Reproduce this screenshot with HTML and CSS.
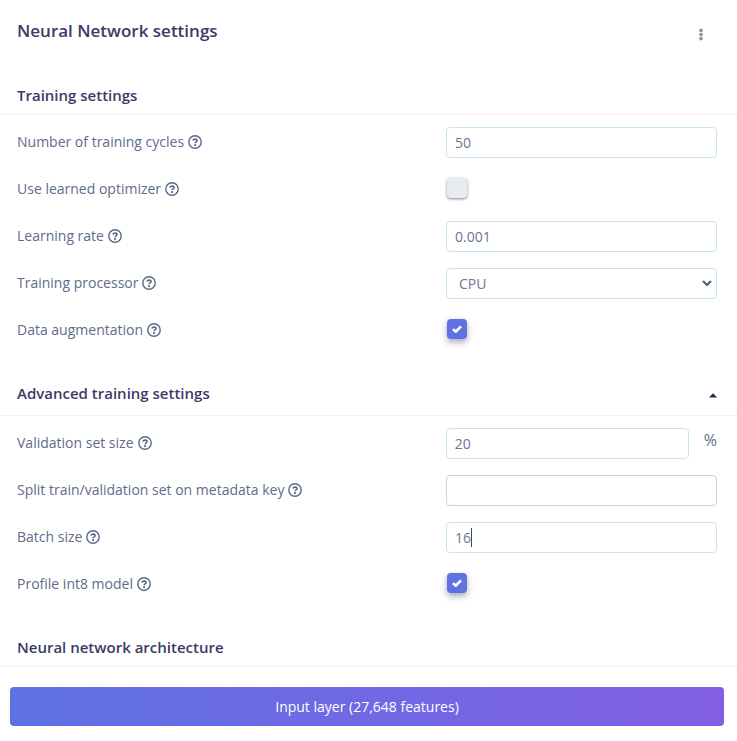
FILE: index.html
```html
<!DOCTYPE html>
<html lang="en">
<head>
<meta charset="utf-8">
<title>Neural Network settings</title>
<link rel="stylesheet" href="styles.css">
</head>
<body>
<svg class="defs" aria-hidden="true">
  <symbol id="help" viewBox="0 0 14 14"><circle cx="7" cy="7" r="6.2" fill="none" stroke="currentColor" stroke-width="1.4"/><path d="M4.9 5.5C5.3 4.5 6.1 4.1 7 4.1c1.2 0 2 .7 2 1.6C9 7 7.1 6.9 7.1 8.3" fill="none" stroke="currentColor" stroke-width="1.6"/><circle cx="7.05" cy="10.1" r="1.1" fill="currentColor"/></symbol>
  <symbol id="check" viewBox="0 0 10 8"><path d="M1 4.1l2.7 2.6L9 1.3" fill="none" stroke="#fff" stroke-width="2.6"/></symbol>
</svg>
<main class="panel">
  <header class="top"><h1>Neural Network settings</h1><svg class="kebab" viewBox="0 0 4 13"><circle cx="2" cy="2.4" r="1.85"/><circle cx="2" cy="6.5" r="1.85"/><circle cx="2" cy="10.6" r="1.85"/></svg></header>
  <section class="group training">
    <h2>Training settings</h2>
    <div class="rows">
      <div class="row"><label>Number of training cycles <svg><use href="#help"/></svg></label><div class="field">50</div></div>
      <div class="row"><label>Use learned optimizer <svg><use href="#help"/></svg></label><span class="box"></span></div>
      <div class="row"><label>Learning rate <svg><use href="#help"/></svg></label><div class="field">0.001</div></div>
      <div class="row"><label>Training processor <svg><use href="#help"/></svg></label><div class="field select">CPU<svg class="chevron" viewBox="0 0 10 7"><path d="M1 1l4 4 4-4"/></svg></div></div>
      <div class="row"><label>Data augmentation <svg><use href="#help"/></svg></label><span class="box on"><svg><use href="#check"/></svg></span></div>
    </div>
  </section>
  <section class="group advanced">
    <h2>Advanced training settings<svg class="caret" viewBox="0 0 8 5"><path d="M0 4.6L4 .2l4 4.4z"/></svg></h2>
    <div class="rows">
      <div class="row"><label>Validation set size <svg><use href="#help"/></svg></label><div class="field short">20</div><span class="unit">%</span></div>
      <div class="row"><label>Split train/validation set on metadata key <svg><use href="#help"/></svg></label><div class="field plain"></div></div>
      <div class="row"><label>Batch size <svg><use href="#help"/></svg></label><div class="field">16<span class="cursor"></span></div></div>
      <div class="row"><label>Profile int8 model <svg><use href="#help"/></svg></label><span class="box on"><svg><use href="#check"/></svg></span></div>
    </div>
  </section>
  <section class="group architecture"><h2>Neural network architecture</h2></section>
  <button class="layer">Input layer (27,648 features)</button>
</main>
</body>
</html>
```
FILE: styles.css
```css
* { box-sizing: border-box; }
body { margin: 0; background: #fff; color: #606c8b; font: 14px/21px "Open Sans", sans-serif; overflow: hidden; }
.defs { display: none; }
.panel { width: 737px; height: 741px; }
.top { height: 80px; padding: 18px 34px 0 17px; display: flex; justify-content: space-between; }
h1, h2 { margin: 0; color: #3b3a66; font-weight: 600; }
h1 { font-size: 17px; line-height: 26px; }
.kebab { width: 4px; height: 13px; margin-top: 10px; fill: #8898aa; }
h2 { height: 35px; padding: 4px 20px 0 17px; border-bottom: 1px solid #eef0f2; font-size: 15px; line-height: 22px; display: flex; justify-content: space-between; }
.training { height: 298px; }
.advanced { height: 254px; }
.advanced h2 { height: 38px; }
.rows { padding: 12px 20px 0 17px; }
.row { height: 47px; display: flex; align-items: flex-start; }
label { width: 429px; padding-top: 4px; display: flex; align-items: center; gap: 4px; }
label svg { width: 14px; height: 14px; color: #5b6788; }
.field { width: 271px; height: 31px; border: 1px solid #c6e5f3; border-radius: 4px; padding: 5px 8px 0; line-height: 20px; color: #6b7693; display: flex; }
.short { width: 243px; }
.plain { border-color: #cad1d7; }
.select { padding-left: 12px; justify-content: space-between; padding-right: 4px; }
.chevron { width: 10px; height: 7px; margin-top: 6px; fill: none; stroke: #525f7f; stroke-width: 2.2; }
.unit { margin-left: 15px; padding-top: 2px; font-size: 16px; }
.box { width: 20px; height: 20px; margin: 4px 0 0 1px; border-radius: 4px; background: #e9ecef; box-shadow: 0 1px 3px #3b3566a0; display: grid; place-items: center; }
.on { background: #5e72e4; box-shadow: 0 3px 6px #32325d70; }
.box svg { width: 10px; height: 8px; }
.caret { width: 8px; height: 5px; margin-top: 11px; fill: #172b4d; }
.cursor { width: 1px; height: 19px; background: #3c4561; }
.layer { display: block; width: 714px; height: 39px; margin: 20px 0 0 10px; padding: 0; border: 0; border-radius: 4px; background: linear-gradient(87deg, #5e72e4, #825ee4); color: #fff; font: 500 14px/21px "Open Sans", sans-serif; }
```
